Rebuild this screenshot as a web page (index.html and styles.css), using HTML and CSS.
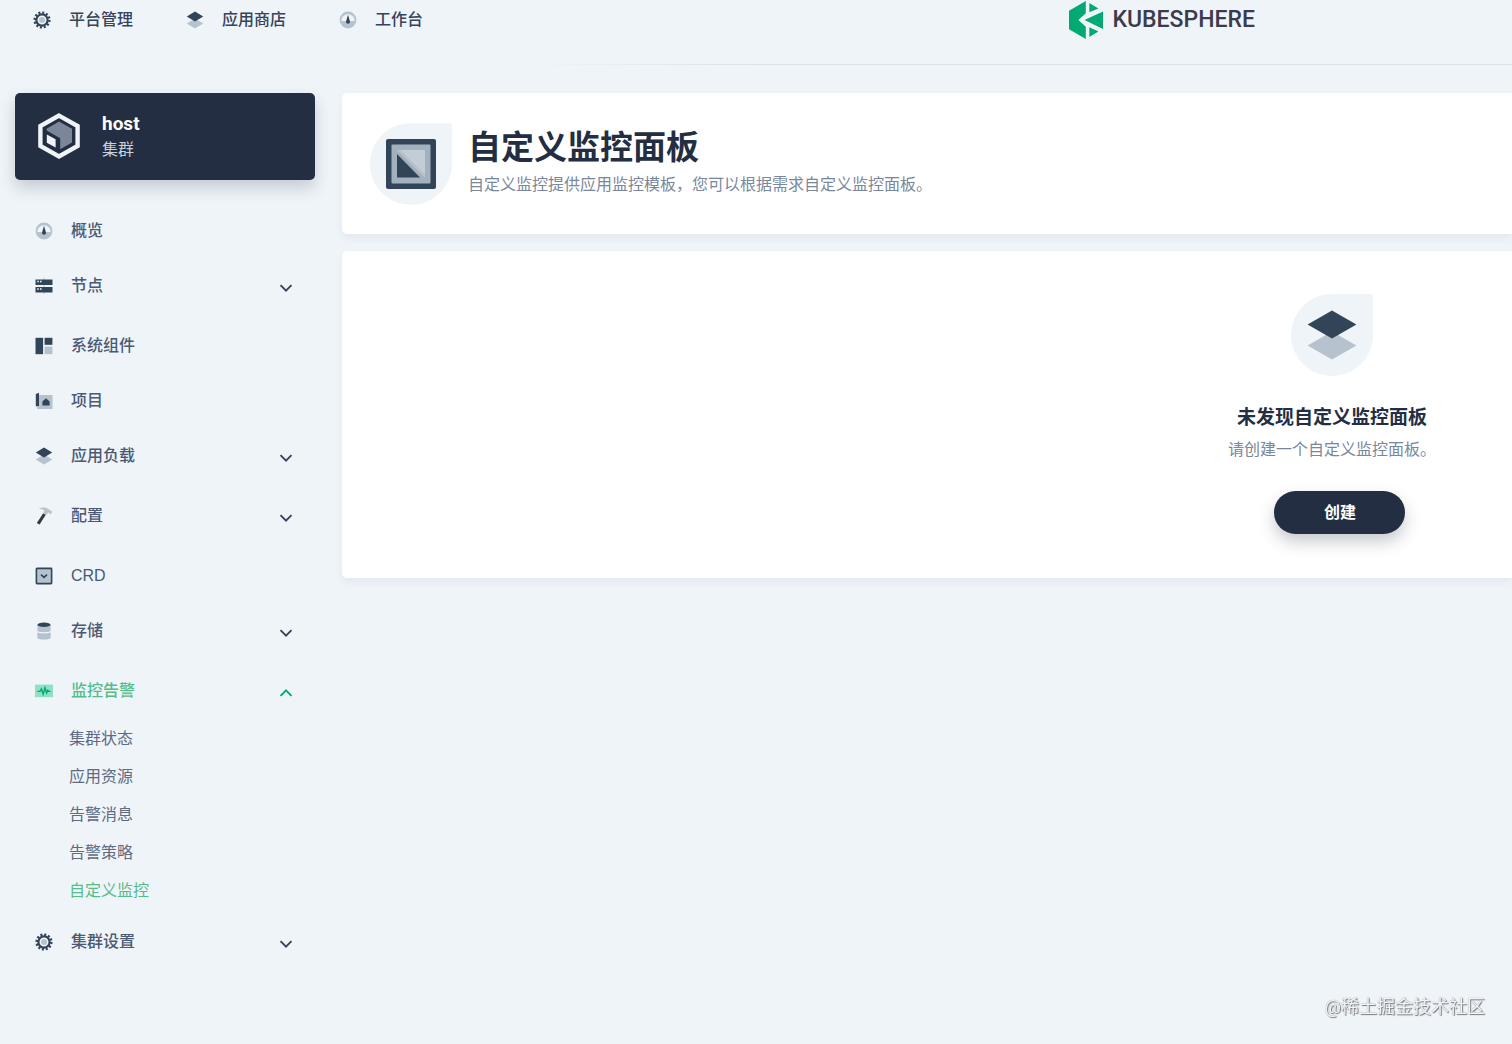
FILE: index.html
```html
<!DOCTYPE html>
<html lang="zh-CN">
<head>
    <meta charset="utf-8">
    <title>自定义监控面板 - KubeSphere</title>
    <meta name="viewport" content="width=device-width, initial-scale=1.0">
    <link rel="stylesheet" href="styles.css">
</head>
<body>
    <!-- shared icons -->
    <svg class="sprite" aria-hidden="true">
        <symbol id="gear" viewBox="0 0 18 18">
            <circle cx="9" cy="9" r="7.3" fill="none" stroke="#324558" stroke-width="2.6" stroke-dasharray="2 1.822"/>
            <circle cx="9" cy="9" r="5.6" fill="none" stroke="#324558" stroke-width="2.2"/>
            <circle cx="9" cy="9" r="3" fill="#b6c2cd"/>
        </symbol>
        <symbol id="layers" viewBox="0 0 18 18">
            <path d="M9 7.4L17.2 12.4L9 17.4L0.8 12.4Z" fill="#b6c2cd"/>
            <path d="M9 0.6L17.2 5.6L9 10.6L0.8 5.6Z" fill="#324558"/>
        </symbol>
        <symbol id="gauge" viewBox="0 0 18 18">
            <circle cx="9" cy="9" r="8.4" fill="#b6c2cd"/>
            <path d="M2.2 10A6.8 6.8 0 1 1 15.8 10Z" fill="#eff4f9"/>
            <path d="M9 3.8L10.9 10.2A2 2 0 1 1 7.1 10.2Z" fill="#324558"/>
        </symbol>
        <symbol id="chevron" viewBox="0 0 14 14">
            <path d="M1.5 4.2L7 9.7L12.5 4.2" fill="none" stroke="currentColor" stroke-width="1.9"/>
        </symbol>
    </svg>

    <header class="header">
        <nav class="top-nav">
            <a href="#"><svg class="icon"><use href="#gear"/></svg>平台管理</a>
            <a href="#"><svg class="icon"><use href="#layers"/></svg>应用商店</a>
            <a href="#"><svg class="icon"><use href="#gauge"/></svg>工作台</a>
        </nav>
        <a class="logo" href="#">
            <svg width="34" height="38" viewBox="0 0 34 38">
                <path d="M0 9.8L16.8 0V12.2L9.4 19L16.8 25.8V38L0 28.2Z" fill="#00aa72"/>
                <path d="M20.3 2L29.4 7.4L20.3 11.2Z" fill="#00aa72"/>
                <path d="M34 10.4V28L15.5 19Z" fill="#00aa72"/>
                <path d="M20.3 26.2L29.4 30.6L20.3 36Z" fill="#00aa72"/>
            </svg>
            <span>KUBESPHERE</span>
        </a>
    </header>

    <div class="layout">
        <aside class="sidebar">
            <div class="cluster">
                <svg width="44" height="46" viewBox="0 0 44 46">
                    <path d="M22 2.6L40.6 13V33L22 43.4L3.4 33V13Z" fill="#242e42" stroke="#eff4f9" stroke-width="4.4"/>
                    <path d="M22 8.6L35 15.8V29.4L23.2 36.2V25.2L9.6 17.6V15.8Z" fill="#7c8699"/>
                    <path d="M9.8 21.4L18.6 26.2V34.6L9.8 29.8Z" fill="#eff4f9"/>
                </svg>
                <div>
                    <div class="cluster-name">host</div>
                    <div class="cluster-type">集群</div>
                </div>
            </div>

            <ul class="menu">
                <li><a href="#"><svg class="icon"><use href="#gauge"/></svg>概览</a></li>
                <li class="has-sub"><a href="#">
                    <svg class="icon" viewBox="0 0 18 18">
                        <path d="M9 1V17" stroke="#b6c2cd"/>
                        <rect x="0.5" y="2.5" width="17" height="5.5" fill="#324558"/>
                        <rect x="0.5" y="10" width="17" height="5.5" fill="#324558"/>
                        <path d="M2.2 4.6H3.8M5 4.6H6.6M2.2 12.1H3.8M5 12.1H6.6" stroke="#eff4f9" stroke-width="1.5"/>
                    </svg>节点<svg class="chevron"><use href="#chevron"/></svg></a></li>
                <li><a href="#">
                    <svg class="icon" viewBox="0 0 18 18">
                        <rect x="0.5" y="0.8" width="7.6" height="16.4" fill="#324558"/>
                        <rect x="9.6" y="0.8" width="7.8" height="7" fill="#324558"/>
                        <rect x="9.6" y="9.6" width="7.8" height="7.6" fill="#b6c2cd"/>
                    </svg>系统组件</a></li>
                <li><a href="#">
                    <svg class="icon" viewBox="0 0 18 18">
                        <path d="M4 3H17.5V17H2V14.5H4Z" fill="#b6c2cd"/>
                        <path d="M0.8 2L4 0.8V14.2H0.8Z" fill="#324558"/>
                        <path d="M11 6.2L14.6 9.6V13.6H7.4V9.6Z" fill="#324558"/>
                    </svg>项目</a></li>
                <li class="has-sub"><a href="#"><svg class="icon"><use href="#layers"/></svg>应用负载<svg class="chevron"><use href="#chevron"/></svg></a></li>
                <li class="has-sub"><a href="#">
                    <svg class="icon" viewBox="0 0 18 18">
                        <path d="M8.2 6.2L10.8 7.8L4.6 17.4L1.8 16Z" fill="#36393f"/>
                        <path d="M3.6 1.6C7.5 0 11.5 0.2 14 2.6L17.4 4.8L15.8 7.2L13.2 5.6L11.4 8L8.4 6.2L9.4 3.6C7.8 2.4 5.8 2 3.6 1.6Z" fill="#b6c2cd"/>
                    </svg>配置<svg class="chevron"><use href="#chevron"/></svg></a></li>
                <li><a href="#">
                    <svg class="icon" viewBox="0 0 18 18">
                        <rect x="1.4" y="1.4" width="15.2" height="15.2" rx="0.6" fill="#b6c2cd" stroke="#324558" stroke-width="1.6"/>
                        <path d="M6 7.6L9 10.4L12 7.6" fill="none" stroke="#324558" stroke-width="1.6"/>
                    </svg>CRD</a></li>
                <li class="has-sub"><a href="#">
                    <svg class="icon" viewBox="0 0 18 18">
                        <path d="M2.4 3V9C4 10.6 14 10.6 15.6 9V3Z" fill="#b6c2cd"/>
                        <path d="M2.4 10.2V16C4 18 14 18 15.6 16V10.2C13 11.8 5 11.8 2.4 10.2Z" fill="#b6c2cd"/>
                        <ellipse cx="9" cy="2.8" rx="6.6" ry="2.2" fill="#324558"/>
                    </svg>存储<svg class="chevron"><use href="#chevron"/></svg></a></li>
                <li class="has-sub open"><a class="active" href="#">
                    <svg class="icon" viewBox="0 0 18 18">
                        <rect x="0" y="2.6" width="18" height="12.6" fill="#90e0c5"/>
                        <path d="M2.4 9.4H5L6.4 7L8.2 12.2L10 5.8L11.6 11L12.8 8.4L13.6 9.4H15.6" fill="none" stroke="#00aa72" stroke-width="1.4"/>
                    </svg>监控告警<svg class="chevron"><use href="#chevron"/></svg></a>
                    <ul class="submenu">
                        <li><a href="#">集群状态</a></li>
                        <li><a href="#">应用资源</a></li>
                        <li><a href="#">告警消息</a></li>
                        <li><a href="#">告警策略</a></li>
                        <li><a class="active" href="#">自定义监控</a></li>
                    </ul>
                </li>
                <li class="has-sub"><a href="#"><svg class="icon"><use href="#gear"/></svg>集群设置<svg class="chevron"><use href="#chevron"/></svg></a></li>
            </ul>
        </aside>

        <main class="main">
            <section class="panel banner">
                <div class="drop">
                    <svg width="50" height="50" viewBox="0 0 50 50">
                        <rect width="50" height="50" rx="2" fill="#324558"/>
                        <rect x="5.5" y="5.5" width="39" height="39" rx="1" fill="#a3b1bf"/>
                        <path d="M14 11H39V36Z" fill="#c3cdd8"/>
                        <path d="M11 11H14L39 36V39Z" fill="#b6c2cd"/>
                        <path d="M11 15L34 38.5H11Z" fill="#324558"/>
                    </svg>
                </div>
                <div>
                    <h1>自定义监控面板</h1>
                    <p>自定义监控提供应用监控模板，您可以根据需求自定义监控面板。</p>
                </div>
            </section>

            <section class="panel empty">
                <div class="empty-content">
                    <div class="drop">
                        <svg width="50" height="50" viewBox="0 0 50 50">
                            <path d="M25 21.5L49.4 35.5L25 49.5L0.6 35.5Z" fill="#b6c2cd"/>
                            <path d="M25 0.5L49.4 14.5L25 28.5L0.6 14.5Z" fill="#324558"/>
                        </svg>
                    </div>
                    <h2>未发现自定义监控面板</h2>
                    <p>请创建一个自定义监控面板。</p>
                    <button type="button">创建</button>
                </div>
            </section>
        </main>
    </div>

    <div class="watermark">@稀土掘金技术社区</div>
</body>
</html>
```

FILE: styles.css
```css
* {
    box-sizing: border-box;
}
body {
    margin: 0;
    background-color: #eff4f9;
    font-family: Roboto, "Noto Sans CJK SC", sans-serif;
    font-size: 16px;
    line-height: 24px;
    color: #36435c;
}
a {
    color: inherit;
    text-decoration: none;
}
ul {
    list-style: none;
    margin: 0;
    padding: 0;
}
h1, h2, p {
    margin: 0;
}
svg {
    display: block;
    flex: none;
}
.sprite {
    position: absolute;
    width: 0;
    height: 0;
}
.icon {
    width: 18px;
    height: 18px;
}

/* header */
.header {
    display: flex;
    align-items: flex-start;
    justify-content: space-between;
    height: 65px;
    padding: 0 257px 0 33px;
    background: linear-gradient(to right, transparent 35%, #dbe1e9 50%) bottom / 100% 1px no-repeat;
}
.top-nav {
    display: flex;
    gap: 53px;
    padding-top: 8px;
    font-weight: 500;
}
.top-nav a {
    display: flex;
    align-items: center;
    gap: 18px;
}
.logo {
    display: flex;
    align-items: center;
    gap: 10px;
    height: 40px;
    color: #3b3b4d;
    font-size: 23px;
    font-weight: 500;
}

/* layout */
.layout {
    display: flex;
    gap: 27px;
    padding: 28px 0 28px 15px;
}
.sidebar {
    flex: none;
    width: 300px;
}
.main {
    flex: 1;
    min-width: 0;
}

/* sidebar */
.cluster {
    display: flex;
    align-items: center;
    gap: 21px;
    height: 87px;
    padding: 0 22px 2px;
    border-radius: 5px;
    background-color: #242e42;
    box-shadow: 0 8px 16px rgba(36, 46, 66, 0.2);
    color: #fff;
}
.cluster-name {
    font-size: 19px;
    font-weight: 700;
    line-height: 28px;
}
.cluster-type {
    color: #c9d1dc;
}
.menu {
    margin-top: 31px;
    font-family: "Liberation Sans", "Noto Sans CJK SC", sans-serif;
}
.menu > li {
    margin-bottom: 15px;
}
.menu > li.has-sub {
    margin-bottom: 20px;
}
.menu > li.open {
    margin-bottom: 12px;
}
.menu > li > a {
    display: flex;
    align-items: center;
    gap: 18px;
    height: 40px;
    padding: 0 22px 0 20px;
    color: #4a5974;
    font-weight: 500;
}
.chevron {
    width: 14px;
    height: 14px;
    margin: 4px 0 0 auto;
    color: #36435c;
}
.open .chevron {
    color: #00aa72;
    transform: rotate(180deg);
}
.submenu {
    padding: 9px 0 0 54px;
    color: #5f6b82;
}
.submenu a {
    display: block;
    line-height: 38px;
}
.menu a.active {
    color: #55bc8a;
}

/* panels */
.panel {
    border-radius: 5px 0 0 5px;
    background-color: #fff;
    box-shadow: 0 4px 8px rgba(36, 46, 66, 0.06);
}
.panel p {
    color: #79879c;
}
.drop {
    display: flex;
    flex: none;
    align-items: center;
    justify-content: center;
    width: 82px;
    height: 82px;
    border-radius: 50% 3px 50% 50%;
    background-color: #eff4f9;
}
.banner {
    display: flex;
    gap: 16px;
    margin-bottom: 17px;
    padding: 30px 28px 29px;
}
.banner h1 {
    color: #242e42;
    font-size: 33px;
    font-weight: 600;
    line-height: 50px;
}
.empty {
    display: flex;
    justify-content: flex-end;
    padding: 43px 76px 44px 28px;
}
.empty-content {
    display: flex;
    flex-direction: column;
    align-items: center;
}
.empty h2 {
    margin: 28px 0 6px;
    color: #242e42;
    font-size: 19px;
    font-weight: 600;
    line-height: 28px;
}
.empty button {
    width: 131px;
    height: 43px;
    margin: 29px 0 0 16px;
    border: none;
    border-radius: 22px;
    background-color: #242e42;
    box-shadow: 0 8px 16px rgba(36, 46, 66, 0.25);
    color: #fff;
    font: inherit;
    font-weight: 600;
    cursor: pointer;
}

.watermark {
    position: fixed;
    right: 27px;
    bottom: 25px;
    color: #eff4f9;
    font-size: 18px;
    text-shadow: 1px 1px 1px #777, 0 0 1px #888;
}
```
